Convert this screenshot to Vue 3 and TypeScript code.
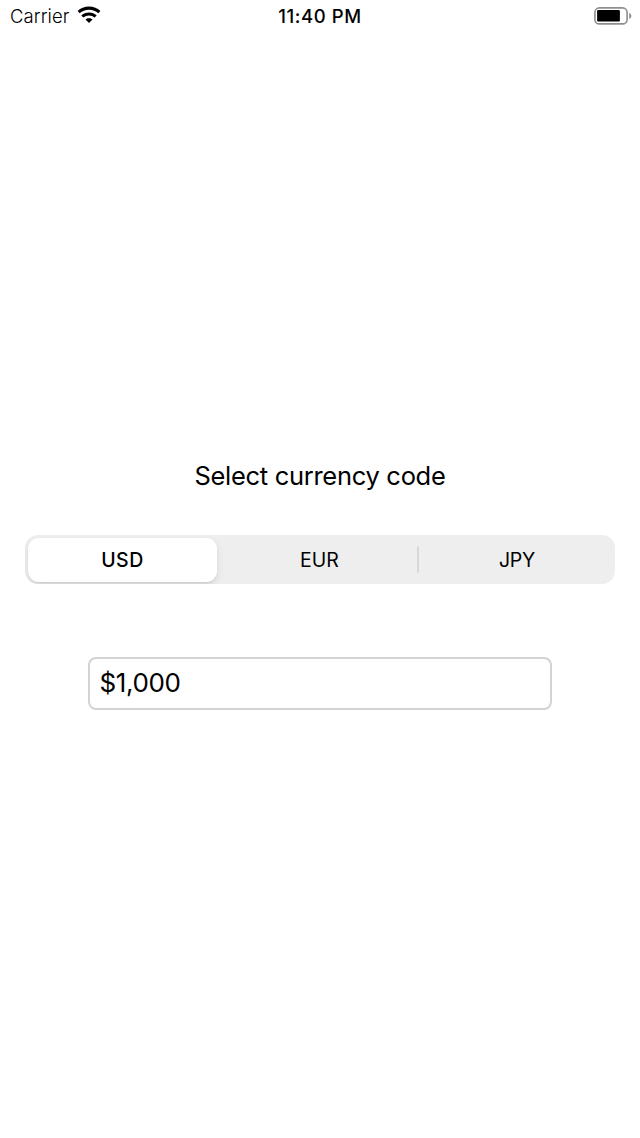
<script setup lang="ts">
import { ref } from 'vue'

const codes = ['USD', 'EUR', 'JPY'] as const
const selected = ref<number>(0)
const amount = ref<string>('$1,000')
</script>

<template>
  <main class="screen">
    <header class="status">
      <div class="carrier">
        <span class="carrier-name">Carrier</span>
        <svg class="wifi" width="24" height="18" viewBox="0 0 24 18">
          <path d="M12 0.6C7.5 0.6 3.5 2.3 0.6 5.1l2.1 2.2C5.2 5 8.4 3.8 12 3.8s6.8 1.2 9.3 3.5l2.1-2.2C20.5 2.3 16.5 0.6 12 0.6z" />
          <path d="M12 6.4c-3 0-5.7 1.1-7.7 3l2.1 2.1C7.9 10.1 9.9 9.4 12 9.4s4.1.7 5.6 2.1l2.1-2.1c-2-1.9-4.7-3-7.7-3z" />
          <path d="M12 12.2c-1.4 0-2.6.5-3.5 1.3l3.5 3.6 3.5-3.6c-.9-.8-2.1-1.3-3.5-1.3z" />
        </svg>
      </div>
      <time class="clock">11:40 PM</time>
      <svg class="battery" width="38" height="18" viewBox="0 0 38 18">
        <rect x="0.9" y="0.9" width="32.2" height="16" rx="4.5" fill="none" stroke="#8e8e8e" stroke-width="1.6" />
        <rect x="3.1" y="3.1" width="22.8" height="11.4" rx="1.2" />
        <path d="M35.2 6c1.4.5 2.1 1.6 2.1 2.9s-.7 2.4-2.1 2.9z" fill="#8e8e8e" />
      </svg>
    </header>
    <h1 class="title">Select currency code</h1>
    <div class="segments">
      <button
        v-for="(code, i) in codes"
        :key="code"
        type="button"
        class="segment"
        :class="{ active: selected === i, divided: i === 2 && selected === 0 }"
        @click="selected = i"
      >{{ code }}</button>
    </div>
    <input v-model="amount" class="amount" type="text" />
  </main>
</template>

<style>
body { background: #fff; }
</style>

<style scoped>
.screen { width: 640px; height: 1138px; box-sizing: border-box; background: #fff; color: #000; font-family: Inter, "Liberation Sans", sans-serif; overflow: hidden; }
.status { height: 34px; display: grid; grid-template-columns: 1fr auto 1fr; box-sizing: border-box; padding: 0 8px 0 10px; }
.carrier { display: flex; align-items: flex-start; }
.carrier-name { font-size: 18.5px; font-weight: 300; line-height: 32px; width: 67px; letter-spacing: 0.06px; }
.wifi { margin-top: 6px; }
.clock { font-size: 18.5px; font-weight: 500; line-height: 32px; letter-spacing: 0.6px; margin-right: 2px; }
.battery { justify-self: end; margin-top: 7px; }
.title { margin: 421px 0 0; font-size: 25.5px; font-weight: 400; line-height: 42px; letter-spacing: -0.3px; text-align: center; }
.segments { display: grid; grid-template-columns: 189px 190px 190px; justify-content: space-between; margin: 38px 25px 0; height: 49px; padding: 3px; box-sizing: border-box; border-radius: 13px; background: #eee; overflow: hidden; }
.segment { position: relative; border: 0; padding: 0; background: transparent; color: #000; font: 400 19.5px/44px Inter, "Liberation Sans", sans-serif; border-radius: 11px; }
.active { background: #fff; font-weight: 500; letter-spacing: 0.5px; box-shadow: 0 4px 10px rgba(0,0,0,.08), 0 2px 2px rgba(0,0,0,.06); }
.divided { letter-spacing: -0.2px; }
.divided::before { content: ""; position: absolute; left: -5px; top: 8px; width: 2px; height: 27px; border-radius: 1px; background: #d8d8d8; }
.amount { display: block; width: 464px; height: 53px; box-sizing: border-box; margin: 73px auto 0; padding: 0 9.5px 2px; border: 2px solid #d3d3d3; border-radius: 8px; background: #fff; color: #000; font: 400 26px Inter, "Liberation Sans", sans-serif; letter-spacing: -0.4px; outline: 0; }
</style>
